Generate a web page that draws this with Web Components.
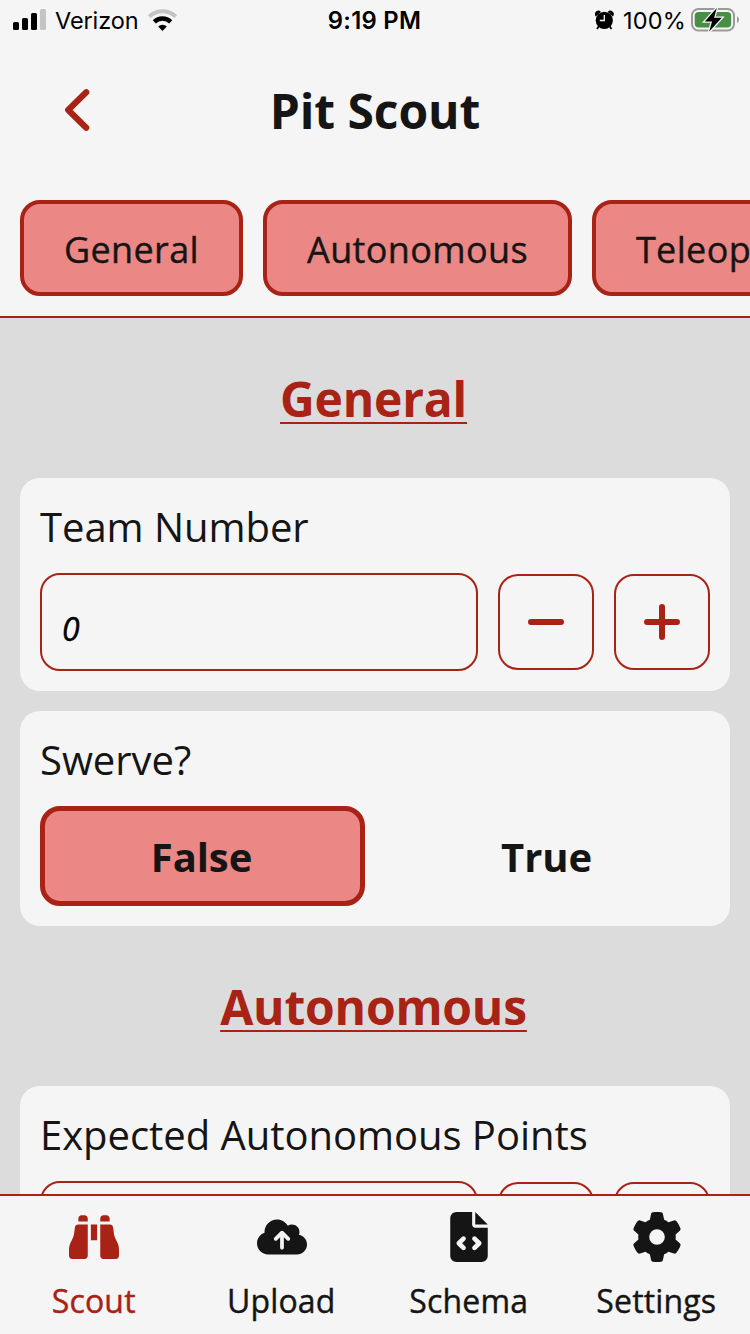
<!DOCTYPE html>
<html lang="en">
<head>
<meta charset="utf-8">
<title>Pit Scout</title>
<style>
html,body{margin:0;height:100%}
body{--red:#a92216;--pink:#eb8784;--paper:#f5f5f5;--ink:#151515;font-family:"Open Sans",sans-serif;color:var(--ink);background:#dcdcdc;overflow:hidden}
</style>
</head>
<body>
<pit-app></pit-app>
<script>
const define = (name, html, setup) => customElements.define(name, class extends HTMLElement {
  connectedCallback() {
    if (this.shadowRoot) return;
    this.attachShadow({mode: 'open'}).innerHTML = html;
    if (setup) setup(this, this.shadowRoot);
  }
});

define('status-bar', `
<style>
:host{display:grid;grid-template-columns:1fr auto 1fr;align-items:center;height:40px;font:400 23.5px/38px Inter,sans-serif;color:#000}
.l,.r{display:flex;align-items:center}
.l{padding-left:13px}
.r{justify-content:flex-end;padding-right:10px}
b{font-weight:600;font-size:23.8px;letter-spacing:.3px;padding:2px 1px 0 0}
svg{display:block}
.carrier{padding-top:2px;margin:0 10px 0 9px;letter-spacing:-.12px}
.pct{padding-top:2px;margin:0 5px 0 9px;letter-spacing:.2px}
</style>
<div class="l">
<svg width="33" height="40" viewBox="13 0 33 40"><g><rect x="13" y="22" width="6" height="8" rx="1.5"/><rect x="22" y="18" width="6" height="12" rx="1.5"/><rect x="31" y="13" width="6" height="17" rx="1.5"/><rect x="40" y="9" width="6" height="21" rx="1.5" fill="#c4c4c4"/></g></svg>
<span class="carrier">Verizon</span>
<svg width="30" height="40" viewBox="148 0 30 40" fill="none"><path d="M149.3 16.600a18.800 18.800 0 0 1 26.400 0" stroke="#c4c4c4" stroke-width="4"/><path d="M154.300 21.800a11.800 11.800 0 0 1 16.400 0" stroke="#000" stroke-width="4.400"/><path d="M158.200 26.600a6 6 0 0 1 8.600 0L162.500 31z" fill="#000"/></svg>
</div>
<b>9:19 PM</b>
<div class="r">
<svg width="19" height="40" viewBox="594.5 0 19 40"><circle cx="603.800" cy="20.300" r="8.600"/><path d="M595.200 16.400a3.400 3.400 0 0 1 5.200-4.400zM612.400 16.400a3.400 3.400 0 0 0-5.200-4.400z"/><path d="M598.500 26l-2 3M609 26l2 3" stroke="#000" stroke-width="1.800"/><path d="M603.800 15v5.500h-4.500" fill="none" stroke="#f5f5f5" stroke-width="1.300"/></svg>
<span class="pct">100%</span>
<svg width="49" height="40" viewBox="691 0 49 40"><rect x="692" y="9" width="42" height="21.500" rx="6.500" fill="none" stroke="#9a9a9a" stroke-width="2"/><rect x="694.700" y="12" width="36.500" height="15.500" rx="4" fill="#468f44"/><path d="M737 16.200v6.800q2-1 2-3.400t-2-3.400z" fill="#9a9a9a"/><path d="M716.800 8L704.800 21.500h7.200L709.200 31.500 721.800 17.700h-7.700z" stroke="#f5f5f5" stroke-width="2.600" paint-order="stroke"/></svg>
</div>`);

define('page-title', `
<style>
:host{display:grid;grid-template-columns:140px 1fr 140px;align-items:center;height:140px}
h1{margin:0;padding-top:1px;text-align:center;font-size:48px;line-height:65px;font-weight:700;letter-spacing:-.1px}
svg{display:block;margin-left:60px}
</style>
<svg width="34" height="50" viewBox="60 85 34 50"><path d="M86.200 92.200L68.200 110l18 17.800" fill="none" stroke="var(--red)" stroke-width="6.200" stroke-linecap="round" stroke-linejoin="round"/></svg>
<h1><slot></slot></h1>`);

define('tab-chip', `
<style>
:host{display:block;flex:none;box-sizing:border-box;height:96px;border:4px solid var(--red);border-radius:20px;background:var(--pink);padding:1px 40px 0;font-size:36px;line-height:89px;letter-spacing:.36px;-webkit-text-stroke:.4px currentColor;white-space:nowrap}
</style><slot></slot>`);

define('tab-strip', `
<style>:host{display:flex;gap:20px;padding:20px;overflow:hidden;border-bottom:2px solid var(--red)}</style><slot></slot>`);

define('section-heading', `
<style>
:host{display:flex;justify-content:center;height:160px;padding:48px 3px 0 0;box-sizing:border-box}
h2{margin:0;font-size:48px;line-height:65px;font-weight:700;letter-spacing:-.2px;color:var(--red);text-decoration:underline;text-decoration-thickness:2px;text-underline-offset:5px;text-decoration-skip-ink:none}
</style><h2><slot></slot></h2>`);

define('field-card', `
<style>
:host{display:block;background:var(--paper);border-radius:20px;padding:20px;margin:0 20px 20px}
.label{font-size:40px;line-height:55px;height:54px;padding-top:1px;margin-bottom:20px;letter-spacing:-.04px;white-space:nowrap}
</style><div class="label"></div><slot></slot>`, (el, root) => {
  root.querySelector('.label').textContent = el.getAttribute('label');
});

define('number-field', `
<style>
:host{display:grid;grid-template-columns:1fr 96px 96px;gap:20px;align-items:center}
div{box-sizing:border-box;border:2px solid var(--red);border-radius:20px}
.value{height:98px;padding:11px 20px 0;font-size:32px;line-height:83px;font-style:italic;-webkit-text-stroke:.4px #000;color:#000}
.value{padding-top:12px}
.step{height:96px;display:grid;place-items:center}
path{fill:none;stroke:var(--red);stroke-width:6;stroke-linecap:round}
</style>
<div class="value"><slot></slot></div>
<div class="step"><svg width="40" height="40"><path d="M5 20h30"/></svg></div>
<div class="step"><svg width="40" height="40"><path d="M5 20h30M20 5v30"/></svg></div>`);

define('choice-option', `
<style>
:host{display:block;box-sizing:border-box;height:100px;border:5px solid transparent;border-radius:20px;padding:1px 2px 0 0;text-align:center;font-size:40px;line-height:89px;font-weight:700;letter-spacing:-.1px}
:host([selected]){background:var(--pink);border-color:var(--red)}
</style><slot></slot>`);

define('choice-field', `
<style>:host{display:grid;grid-template-columns:325px 325px;gap:20px}</style><slot></slot>`);

const icons = {
  scout: [512, 512, 'M128 32h32c17.700 0 32 14.300 32 32V96H96V64c0-17.700 14.300-32 32-32zm64 96V448c0 17.700-14.300 32-32 32H32c-17.700 0-32-14.300-32-32V388.900c0-34.600 9.400-68.600 27.200-98.300C40.900 267.800 49.700 242.400 53 216L60.500 156c2-16 15.600-28 31.800-28H192zm227.800 0c16.100 0 29.800 12 31.800 28L459 216c3.300 26.400 12.100 51.800 25.800 74.600c17.800 29.700 27.200 63.700 27.200 98.300V448c0 17.700-14.300 32-32 32H352c-17.700 0-32-14.300-32-32V128h99.800zM320 64c0-17.700 14.300-32 32-32h32c17.700 0 32 14.300 32 32V96H320V64zm-32 64V288H224V128h64z'],
  upload: [640, 512, 'M144 480C64.500 480 0 415.500 0 336c0-62.800 40.200-116.200 96.200-135.900c-.1-2.700-.2-5.400-.2-8.100c0-88.400 71.600-160 160-160c59.300 0 111 32.200 138.700 80.200C409.900 102 428.300 96 448 96c53 0 96 43 96 96c0 12.200-2.300 23.800-6.400 34.600C596 238.400 640 290.100 640 352c0 70.700-57.300 128-128 128H144zm79-217c-9.400 9.400-9.400 24.600 0 33.900s24.600 9.400 33.900 0l39-39V392c0 13.300 10.700 24 24 24s24-10.700 24-24V257.900l39 39c9.400 9.400 24.600 9.400 33.900 0s9.400-24.600 0-33.900l-80-80c-9.400-9.400-24.600-9.400-33.900 0l-80 80z'],
  schema: [384, 512, 'M64 0C28.700 0 0 28.700 0 64V448c0 35.300 28.700 64 64 64H320c35.300 0 64-28.700 64-64V160H256c-17.700 0-32-14.300-32-32V0H64zM256 0V128H384L256 0zM153 289l-31 31 31 31c9.400 9.400 9.400 24.600 0 33.900s-24.600 9.400-33.900 0L71 337c-9.400-9.400-9.400-24.600 0-33.900l48-48c9.400-9.400 24.600-9.400 33.900 0s9.400 24.600 0 33.900zM265 255l48 48c9.400 9.400 9.400 24.600 0 33.900l-48 48c-9.400 9.400-24.600 9.400-33.900 0s-9.400-24.600 0-33.900l31-31-31-31c-9.400-9.400-9.400-24.600 0-33.900s24.600-9.400 33.900 0z'],
  settings: [512, 512, 'M495.900 166.600c3.200 8.700 .5 18.400-6.400 24.600l-43.300 39.400c1.100 8.300 1.700 16.800 1.700 25.400s-.6 17.100-1.700 25.400l43.300 39.400c6.900 6.200 9.600 15.900 6.400 24.600c-4.400 11.900-9.700 23.300-15.800 34.300l-4.700 8.100c-6.600 11-14 21.400-22.100 31.200c-5.900 7.200-15.700 9.600-24.500 6.800l-55.700-17.700c-13.400 10.300-28.200 18.900-44 25.400l-12.500 57.100c-2 9.100-9 16.300-18.200 17.800c-13.800 2.300-28 3.500-42.500 3.500s-28.700-1.200-42.500-3.500c-9.200-1.500-16.200-8.700-18.200-17.800l-12.500-57.100c-15.800-6.500-30.600-15.100-44-25.400L83.100 425.900c-8.800 2.800-18.600 .3-24.500-6.800c-8.100-9.800-15.500-20.200-22.100-31.200l-4.700-8.100c-6.100-11-11.400-22.400-15.800-34.300c-3.200-8.700-.5-18.400 6.400-24.600l43.300-39.400C64.600 273.100 64 264.600 64 256s.6-17.100 1.700-25.400L22.400 191.200c-6.900-6.200-9.600-15.900-6.400-24.600c4.400-11.900 9.700-23.300 15.800-34.300l4.700-8.100c6.600-11 14-21.400 22.100-31.200c5.900-7.200 15.700-9.600 24.500-6.800l55.700 17.700c13.400-10.300 28.200-18.900 44-25.400l12.500-57.100c2-9.100 9-16.300 18.200-17.800C227.300 1.200 241.500 0 256 0s28.700 1.200 42.500 3.500c9.200 1.500 16.200 8.700 18.200 17.800l12.500 57.100c15.800 6.500 30.600 15.100 44 25.400l55.700-17.700c8.800-2.800 18.600-.3 24.500 6.800c8.100 9.800 15.500 20.200 22.100 31.200l4.700 8.100c6.100 11 11.400 22.400 15.800 34.300zM256 336a80 80 0 1 0 0-160 80 80 0 1 0 0 160z']
};

define('nav-item', `
<style>
:host{display:flex;flex-direction:column;align-items:center;padding-top:16px;font-size:32px;line-height:43px;letter-spacing:.15px;-webkit-text-stroke:.4px currentColor}
:host([active]){color:var(--red)}
svg{display:block;width:50px;height:50px;fill:currentColor;stroke:none;margin:0 0 17px 1px}
</style><svg><path></path></svg><span><slot></slot></span>`, (el, root) => {
  const [w, h, d] = icons[el.getAttribute('icon')];
  root.querySelector('svg').setAttribute('viewBox', `0 0 ${w} ${h}`);
  root.querySelector('path').setAttribute('d', d);
});

define('bottom-nav', `
<style>:host{display:grid;grid-template-columns:repeat(4,1fr);height:138px;background:var(--paper);border-top:2px solid var(--red)}</style><slot></slot>`);

define('pit-app', `
<style>
:host{display:flex;flex-direction:column;width:750px;height:1334px;overflow:hidden}
header{flex:none;background:var(--paper)}
main{flex:1;min-height:0;overflow:hidden}
</style>
<header>
<status-bar></status-bar>
<page-title>Pit Scout</page-title>
<tab-strip><tab-chip>General</tab-chip><tab-chip>Autonomous</tab-chip><tab-chip>Teleop</tab-chip></tab-strip>
</header>
<main>
<section-heading>General</section-heading>
<field-card label="Team Number"><number-field>0</number-field></field-card>
<field-card label="Swerve?"><choice-field><choice-option selected>False</choice-option><choice-option>True</choice-option></choice-field></field-card>
<section-heading style="margin-top:-20px">Autonomous</section-heading>
<field-card label="Expected Autonomous Points"><number-field></number-field></field-card>
</main>
<bottom-nav>
<nav-item icon="scout" active>Scout</nav-item><nav-item icon="upload">Upload</nav-item><nav-item icon="schema">Schema</nav-item><nav-item icon="settings">Settings</nav-item>
</bottom-nav>`);
</script>
</body>
</html>
